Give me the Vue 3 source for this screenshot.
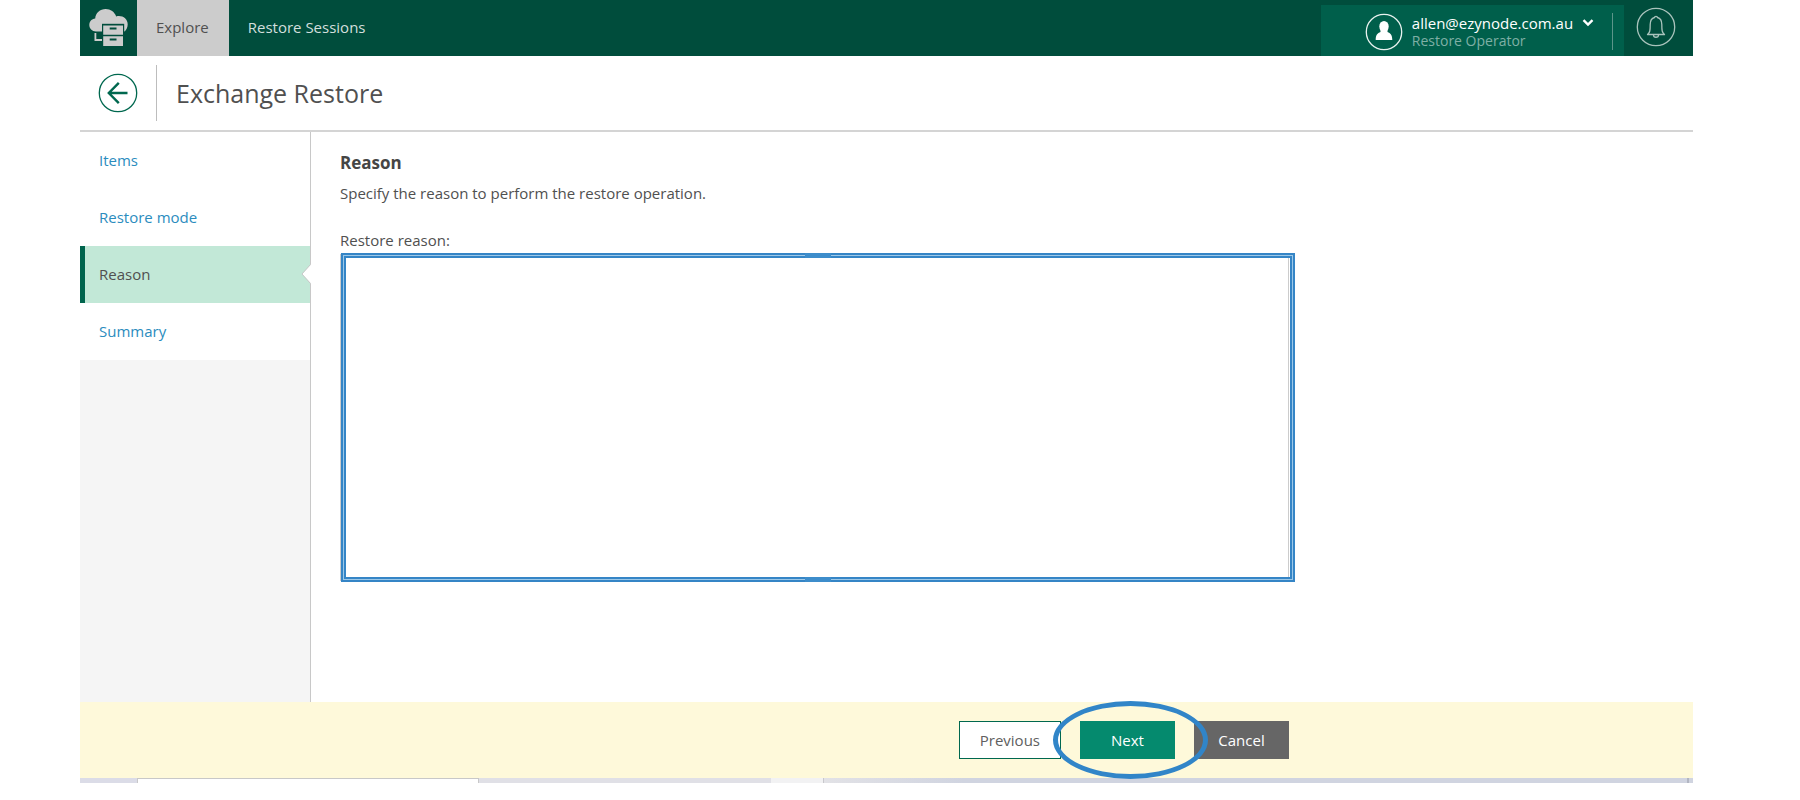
<script setup>
import { ref } from 'vue'

const tabs = ['Explore', 'Restore Sessions']
const activeTab = ref('Explore')

const steps = ['Items', 'Restore mode', 'Reason', 'Summary']
const step = ref('Reason')

const reason = ref('')

function move(delta) {
  const i = steps.indexOf(step.value) + delta
  if (i >= 0 && i < steps.length) step.value = steps[i]
}
</script>

<template>
  <div class="page">
    <header class="topbar">
      <div class="logo">
        <svg width="40" height="38" viewBox="0 0 40 38" aria-hidden="true">
          <path d="M7 22.500C3 22.500 0.300 19.500 0.300 16C0.300 12.600 2.700 10 6.200 9.600C6.500 4 11 0 16.700 0C21.500 0 25.600 3 27.200 7.400C33 5.800 38.700 9.500 38.700 15.300C38.700 18.600 37.300 21 35.500 22.500Z" fill="#ccc" />
          <path d="M13 14.800H35.200V38H13Z" fill="#004d3c" />
          <path d="M14.200 16.500H34V25.700H14.200ZM14.200 27.300H34V37H14.200Z" fill="#ccc" />
          <path d="M20.700 18.500H27.500V20.500H20.700ZM20.700 29.500H27.500V31.500H20.700Z" fill="#004d3c" />
          <path d="M5.500 24H7.300V30H13V32H5.500Z" fill="#ccc" />
        </svg>
      </div>
      <nav class="tabs">
        <button
          v-for="t in tabs"
          :key="t"
          class="tab"
          :class="{ active: t === activeTab }"
          @click="activeTab = t"
        >{{ t }}</button>
      </nav>
      <button class="user">
        <svg class="avatar" width="38" height="38" viewBox="0 0 38 38" aria-hidden="true">
          <circle cx="19" cy="19" r="17.700" fill="none" stroke="#e8f2ef" stroke-width="1.300" />
          <ellipse cx="19" cy="13.500" rx="4.700" ry="5.500" fill="#fff" />
          <path d="M15.500 16H22.500V19C25.500 20 27.300 22 27.300 27H10.700C10.700 22 12.500 20 15.500 19Z" fill="#fff" />
        </svg>
        <span class="who">
          <span class="mail">allen@ezynode.com.au
            <svg width="12" height="8" viewBox="0 0 12 8" aria-hidden="true">
              <path d="M1.500 1.200L6 5.500L10.500 1.200" fill="none" stroke="#fff" stroke-width="2.400" />
            </svg>
          </span>
          <span class="role">Restore Operator</span>
        </span>
        <span class="user-line"></span>
      </button>
      <button class="bell" aria-label="Notifications">
        <svg width="40" height="40" viewBox="0 0 40 40" fill="none" stroke="#a9c3bc" stroke-width="1.300" aria-hidden="true">
          <circle cx="20" cy="20" r="18.700" />
          <path d="M11.500 27.500C14 25.500 14.200 23.500 14.200 17.500C14.200 13.500 16.500 11 18.500 10.500C18.500 9 21.500 9 21.500 10.500C23.500 11 25.800 13.500 25.800 17.500C25.800 23.500 26 25.500 28.500 27.500Z" stroke-linejoin="round" />
          <path d="M17.500 28C17.500 31 22.500 31 22.500 28" />
        </svg>
      </button>
    </header>

    <div class="titlebar">
      <button class="back" aria-label="Back">
        <svg width="40" height="40" viewBox="0 0 40 40" fill="none" stroke="#00684f" aria-hidden="true">
          <circle cx="20" cy="20" r="18.700" stroke-width="1.300" />
          <path d="M29.500 20H11M20.800 9.800L10.800 20L20.800 30.200" stroke-width="2.400" />
        </svg>
      </button>
      <h1>Exchange Restore</h1>
    </div>

    <div class="body">
      <nav class="steps">
        <a
          v-for="s in steps"
          :key="s"
          href="#"
          class="step"
          :class="{ current: s === step }"
          @click.prevent="step = s"
        >
          {{ s }}
          <svg v-if="s === step" class="notch" width="10" height="20" viewBox="0 0 10 20" aria-hidden="true">
            <path d="M10 0.500L9 1.500L1 10L9 18.500L10 19.500Z" fill="#fff" />
            <path d="M9 1L1 10L9 19" fill="none" stroke="#c8c8c8" />
          </svg>
        </a>
      </nav>
      <main class="content">
        <h2>Reason</h2>
        <p>Specify the reason to perform the restore operation.</p>
        <label for="reason">Restore reason:</label>
        <div class="field">
          <textarea id="reason" v-model="reason"></textarea>
          <div class="frame"></div>
        </div>
      </main>
    </div>

    <footer class="actions">
      <div class="buttons">
        <button class="btn previous" @click="move(-1)">Previous</button>
        <div class="next-wrap">
          <button class="btn next" @click="move(1)">Next</button>
          <div class="ring"></div>
        </div>
        <button class="btn cancel">Cancel</button>
      </div>
    </footer>

    <div class="strip">
      <span class="strip-start"></span>
      <span class="strip-tab"></span>
      <span class="strip-mid"></span>
      <span class="strip-light"></span>
      <span class="strip-rest"></span>
      <span class="strip-end"></span>
    </div>
  </div>
</template>

<style>
body {
  margin: 0;
  background: #fff;
}
</style>

<style scoped>
.page {
  display: flex;
  flex-direction: column;
  min-height: 100vh;
  box-sizing: border-box;
  padding: 0 107px 17px 80px;
  font-family: "Open Sans", "Noto Sans", sans-serif;
  font-size: 15px;
  line-height: 20px;
  color: #505050;
}

button {
  font: inherit;
  border: 0;
  padding: 0;
  cursor: pointer;
}

/* top bar */
.topbar {
  display: flex;
  height: 56px;
  background: #004d3c;
}
.logo {
  width: 57px;
  padding: 9px 0 0 9px;
  box-sizing: border-box;
}
.tabs {
  display: flex;
  flex: 1;
}
.tab {
  padding: 0 19px 2px;
  background: none;
  color: #d3dfdc;
}
.tab.active {
  padding-right: 20px;
  background: #ccc;
  color: #505050;
}
.user {
  display: flex;
  align-items: center;
  margin-top: 5px;
  padding: 2px 11px 0 44px;
  background: #005f4b;
  color: #fff;
  text-align: left;
}
.who {
  display: flex;
  flex-direction: column;
  margin-left: 9px;
  line-height: 17px;
}
.mail svg {
  margin: 0 0 2px 5px;
}
.role {
  font-size: 14px;
  color: #7fafa5;
}
.user-line {
  width: 1px;
  height: 37px;
  margin-left: 18px;
  background: #5c958a;
}
.bell {
  display: flex;
  align-items: center;
  padding: 0 17px 2px 12px;
  background: none;
}

/* page title */
.titlebar {
  display: flex;
  align-items: center;
  height: 74px;
  padding-left: 18px;
  border-bottom: 2px solid #d4d4d4;
}
.back {
  display: flex;
  background: none;
}
h1 {
  margin: 0 0 0 18px;
  padding-left: 19px;
  border-left: 1px solid #bdbdbd;
  font-size: 25px;
  font-weight: 400;
  line-height: 56px;
}

/* wizard */
.body {
  display: flex;
  flex: 1;
}
.steps {
  width: 230px;
  background: #f5f5f5;
  border-right: 1px solid #c8c8c8;
}
.step {
  position: relative;
  display: flex;
  align-items: center;
  height: 57px;
  padding: 0 0 2px 19px;
  box-sizing: border-box;
  background: #fff;
  color: #2b8cbe;
  text-decoration: none;
}
.step.current {
  padding-left: 14px;
  border-left: 5px solid #00644d;
  background: #c2e8d7;
  color: #505050;
}
.notch {
  position: absolute;
  right: -1px;
  top: 18px;
}
.content {
  display: flex;
  flex-direction: column;
  flex: 1;
  padding: 21px 29px 0;
}
h2 {
  margin: 0;
  font-size: 17px;
  font-weight: 700;
  line-height: 20px;
  color: #454545;
}
p {
  margin: 10px 0 27px;
}
label {
  margin-bottom: 4px;
}
.field {
  position: relative;
  max-width: 949px;
  height: 327px;
}
textarea {
  display: block;
  width: 100%;
  height: 100%;
  box-sizing: border-box;
  padding: 10px;
  border: 1px solid #ccc;
  outline: 0;
  resize: none;
  font: inherit;
  color: inherit;
}

/* blue frame around the text box */
.frame {
  position: absolute;
  inset: -1px -6px -1px 1px;
  border: 2px solid #3585c6;
  box-shadow: inset 0 0 0 1px #9cc8e8, inset 0 0 0 3px #3585c6;
  pointer-events: none;
}
.frame::before,
.frame::after {
  content: "";
  position: absolute;
  left: calc(50% - 13px);
  width: 26px;
  height: 5px;
  background: #3d8dcb;
}
.frame::before {
  top: -2px;
}
.frame::after {
  bottom: -2px;
}

/* footer */
.actions {
  padding: 19px 0;
  background: #fef9da;
}
.buttons {
  display: flex;
  justify-content: flex-end;
  gap: 19px;
  max-width: 1209px;
}
.btn {
  min-width: 95px;
  height: 38px;
  padding: 0 19px;
  color: #fff;
}
.previous {
  padding: 0 20px;
  background: #fff;
  border: 1px solid #00684f;
  color: #606060;
}
.next-wrap {
  position: relative;
}
.next {
  background: #058a6e;
}
.cancel {
  background: #666;
}
.ring {
  position: absolute;
  inset: -20px -33px -20px -27px;
  border: 5px solid #3185c8;
  border-radius: 50%;
  pointer-events: none;
}

/* window edge under the footer */
.strip {
  display: flex;
  height: 5px;
  background: #e0e0e6;
}
.strip-start {
  width: 57px;
  background: #dbdce7;
}
.strip-tab {
  width: 342px;
  box-sizing: border-box;
  border: 1px solid #c8c8c8;
  border-bottom: 0;
  background: #fff;
}
.strip-mid {
  width: 292px;
}
.strip-light {
  width: 52px;
  border-right: 1px solid #c8c8cc;
  background: #f2f2f3;
}
.strip-rest {
  flex: 1;
  background: linear-gradient(90deg, #e2e2e6, #d0d4e0 140px);
}
.strip-end {
  width: 4px;
  border-left: 2px solid #b2b6c2;
  background: #d0d4e0;
}
</style>
